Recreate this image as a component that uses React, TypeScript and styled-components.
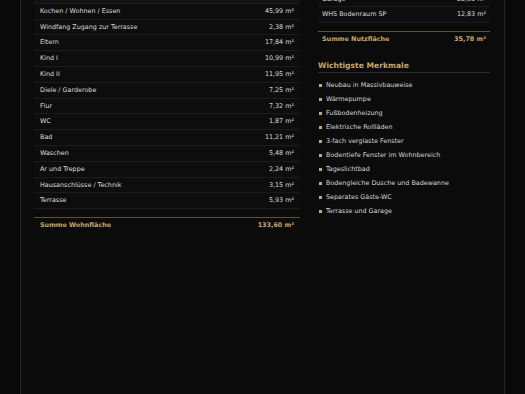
import React from 'react';
import styled, { createGlobalStyle } from 'styled-components';

interface AreaRow {
  name: string;
  area: string;
}

const wohnflaeche: AreaRow[] = [
  { name: 'Kochen / Wohnen / Essen', area: '45,99 m²' },
  { name: 'Windfang Zugang zur Terrasse', area: '2,38 m²' },
  { name: 'Eltern', area: '17,84 m²' },
  { name: 'Kind I', area: '10,99 m²' },
  { name: 'Kind II', area: '11,95 m²' },
  { name: 'Diele / Garderobe', area: '7,25 m²' },
  { name: 'Flur', area: '7,32 m²' },
  { name: 'WC', area: '1,87 m²' },
  { name: 'Bad', area: '11,21 m²' },
  { name: 'Waschen', area: '5,48 m²' },
  { name: 'Ar und Treppe', area: '2,24 m²' },
  { name: 'Hausanschlüsse / Technik', area: '3,15 m²' },
  { name: 'Terrasse', area: '5,93 m²' },
];

const nutzflaeche: AreaRow[] = [
  { name: 'Garage', area: '22,95 m²' },
  { name: 'WHS Bodenraum SP', area: '12,83 m²' },
];

const merkmale = [
  'Neubau in Massivbauweise',
  'Wärmepumpe',
  'Fußbodenheizung',
  'Elektrische Rollläden',
  '3-fach verglaste Fenster',
  'Bodentiefe Fenster im Wohnbereich',
  'Tageslichtbad',
  'Bodengleiche Dusche und Badewanne',
  'Separates Gäste-WC',
  'Terrasse und Garage',
];

const GlobalStyle = createGlobalStyle`
  html, body {
    margin: 0;
    padding: 0;
    background: #090909;
    overflow: hidden;
  }
  body {
    font-family: 'DejaVu Sans', Verdana, sans-serif;
    color: #d6d6d6;
  }
`;

// the page is scrolled a little: the top of the panel lies above the window
const Page = styled.div`
  margin: -12px 20px 0;
  min-height: 420px;
  background: #0b0b0b;
  border-left: 1px solid #262626;
  border-right: 1px solid #262626;
  padding: 0 14px 0 13px;
  display: grid;
  grid-template-columns: 266px 172px;
  column-gap: 18px;
  align-items: start;
`;

const Column = styled.div<{ $top?: number }>`
  display: flex;
  flex-direction: column;
  padding-top: ${(p) => p.$top ?? 0}px;
`;

const Table = styled.div`
  display: flex;
  flex-direction: column;
`;

const HeaderRow = styled.div`
  height: 14.75px;
  background: #121212;
  border-bottom: 1px solid #1f1f1f;
`;

const Row = styled.div<{ $pad: number }>`
  display: flex;
  justify-content: space-between;
  align-items: center;
  padding: 3px ${(p) => p.$pad}px;
  line-height: 8.8px;
  font-size: 6.4px;
  background: #0d0d0d;
  border-bottom: 1px solid #1c1c1c;
`;

const Cell = styled.span`
  color: #dcdcdc;
  white-space: nowrap;
`;

const SumRow = styled.div<{ $pad: number }>`
  display: flex;
  justify-content: space-between;
  align-items: center;
  margin-top: 7.5px;
  padding: 3.5px ${(p) => p.$pad}px;
  line-height: 8.8px;
  font-size: 6.4px;
  font-weight: bold;
  color: #c9a66b;
  border-top: 1px solid rgba(201, 166, 107, 0.45);
`;

const Heading = styled.h3`
  margin: 14px 0 0;
  padding-bottom: 2px;
  font-size: 7.6px;
  line-height: 9px;
  font-weight: bold;
  color: #c9a66b;
  border-bottom: 1px solid #2a2a2a;
`;

const List = styled.ul`
  list-style: none;
  margin: 5px 0 0;
  padding: 0;
`;

const Item = styled.li`
  display: flex;
  align-items: center;
  gap: 4px;
  height: 14px;
  padding-left: 1px;
  font-size: 6.4px;
  color: #d4d4d4;

  &::before {
    content: '';
    width: 3px;
    height: 3px;
    background: #c9a66b;
    flex-shrink: 0;
  }
`;

const AreaTable: React.FC<{ rows: AreaRow[]; pad: number; header?: boolean }> = ({ rows, pad, header }) => (
  <Table>
    {header && <HeaderRow />}
    {rows.map((r) => (
      <Row key={r.name} $pad={pad}>
        <Cell>{r.name}</Cell>
        <Cell>{r.area}</Cell>
      </Row>
    ))}
  </Table>
);

const App: React.FC = () => {
  return (
    <>
      <GlobalStyle />
      <Page>
        <Column>
          <AreaTable rows={wohnflaeche} pad={6} header />
          <SumRow $pad={6}>
            <span>Summe Wohnfläche</span>
            <span>133,60 m²</span>
          </SumRow>
        </Column>
        <Column $top={3.5}>
          <AreaTable rows={nutzflaeche} pad={4} />
          <SumRow $pad={4}>
            <span>Summe Nutzfläche</span>
            <span>35,78 m²</span>
          </SumRow>
          <Heading>Wichtigste Merkmale</Heading>
          <List>
            {merkmale.map((m) => (
              <Item key={m}>{m}</Item>
            ))}
          </List>
        </Column>
      </Page>
    </>
  );
};

export default App;
